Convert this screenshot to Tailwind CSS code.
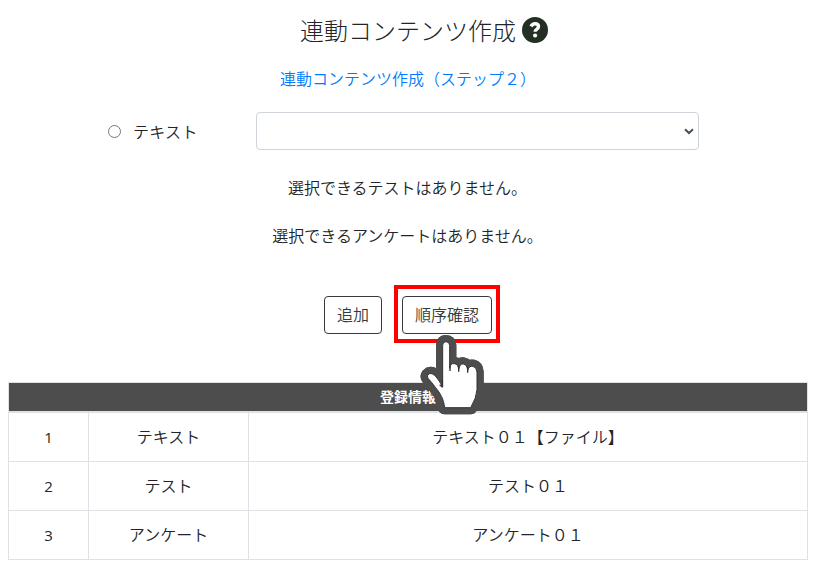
<!DOCTYPE html>
<html lang="ja"><head><meta charset="utf-8"><title>連動コンテンツ作成</title>
<script src="https://cdn.jsdelivr.net/npm/@tailwindcss/browser@4"></script></head>
<body class="w-[814px] h-[573px] overflow-hidden bg-white font-['Noto_Sans_CJK_JP',sans-serif] font-[350] text-base leading-6 text-[#212529]">
<main class="relative h-full px-2 pt-3">
<h1 class="flex h-[36px] items-center justify-center gap-[6px] pl-[34px] text-2xl font-light">連動コンテンツ作成
<svg class="size-[26px]" viewBox="0 0 26 26"><circle cx="13" cy="13" r="13" fill="#233023"/><path d="M9 9.4C10 7.5 11.4 6.8 13 6.8c2.2 0 3.5 1.1 3.5 2.8 0 2.7-3.4 2.6-3.4 5.2" fill="none" stroke="#fff" stroke-width="3.4"/><circle cx="13.1" cy="18.5" r="2.1" fill="#fff"/></svg></h1>
<p class="mt-[18px] pl-[2px] text-center text-[#007bff]">連動コンテンツ作成（ステップ２）</p>
<div class="mt-[22px] ml-[100px] flex h-[38px] items-center">
<input type="radio" class="size-[13px]"><label class="ml-3 w-[123px] tracking-[0.3px]">テキスト</label>
<div class="flex h-[38px] w-[443px] items-center justify-end rounded border border-[#ced4da] pr-[4px]"><svg class="h-[7px] w-[10px]" viewBox="0 0 10 7"><path d="M1 1.2L5 5l4-3.8" fill="none" stroke="#495057" stroke-width="2"/></svg></div></div>
<p class="mt-[25px] pl-[1px] text-center">選択できるテストはありません。</p>
<p class="mt-6 pl-[1px] text-center">選択できるアンケートはありません。</p>
<div class="mt-[38px] flex h-[58px] items-center pl-[316px]"><button class="mt-px h-[38px] w-[58px] rounded border border-[#343a40] pb-0.5 text-[#343a40]">追加</button>
<div class="ml-[12px] flex h-[58px] w-[106px] items-center justify-center border-4 border-[#ff0000]"><button class="mt-px h-[38px] w-[90px] rounded border border-[#343a40] pb-0.5 text-[#343a40]">順序確認</button></div></div>
<section class="mt-[39px] w-[800px] border border-[#dee2e6] text-center">
<div class="h-[30px] border-b-2 border-[#dee2e6] bg-[#4d4d4d] text-sm leading-[27px] font-bold text-white">登録情報</div>
<div class="grid h-[49px] grid-cols-[80px_160px_1fr] divide-x divide-[#dee2e6] border-b border-[#dee2e6] leading-[46px]"><div class="font-['Open_Sans'] text-[15px] font-normal leading-[48px]">1</div><div>テキスト</div><div>テキスト０１【ファイル】</div></div>
<div class="grid h-[49px] grid-cols-[80px_160px_1fr] divide-x divide-[#dee2e6] border-b border-[#dee2e6] leading-[46px]"><div class="font-['Open_Sans'] text-[15px] font-normal leading-[48px]">2</div><div>テスト</div><div>テスト０１</div></div>
<div class="grid h-[48px] grid-cols-[80px_160px_1fr] divide-x divide-[#dee2e6] leading-[46px]"><div class="font-['Open_Sans'] text-[15px] font-normal leading-[48px]">3</div><div>アンケート</div><div>アンケート０１</div></div>
</section>
<svg class="absolute left-[415px] top-[330px] h-[90px] w-[75px]" viewBox="0 0 225 270" stroke-linejoin="round"><path id="hand" d="M83 170V46Q83 35 93 35T104 46V115Q106 99 118 101Q130 102 131 119Q134 100 145 102Q157 104 158 122Q162 106 174 109Q185 112 186 126V178Q185 203 167 233H89C86 207 76 190 62 173C52 160 48 155 39 145Q33 137 43 131C57 128 67 144 83 170Z" fill="#4d4d4d" stroke="#4d4d4d" stroke-width="40"/><use href="#hand"/><path d="M83 170V46Q83 35 93 35T104 46V115Q106 99 118 101Q130 102 131 119Q134 100 145 102Q157 104 158 122Q162 106 174 109Q185 112 186 126V178Q185 203 167 233H89C86 207 76 190 62 173C52 160 48 155 39 145Q33 137 43 131C57 128 67 144 83 170Z" fill="#fff" stroke="#333" stroke-width="3"/><path d="M105 108v15M131 108v17M158 111v17M82 150v21l-8-7" fill="none" stroke="#333" stroke-width="4"/></svg>
</main></body></html>
